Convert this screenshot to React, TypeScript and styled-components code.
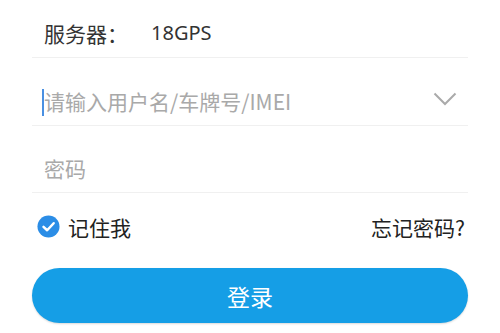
import React, { useState } from "react";
import styled, { createGlobalStyle } from "styled-components";

const GlobalStyle = createGlobalStyle`
  html, body {
    margin: 0;
    padding: 0;
    background: #ffffff;
  }
  body {
    font-family: "Noto Sans CJK SC", "Noto Sans", sans-serif;
  }
`;

const Page = styled.div`
  width: 500px;
  height: 333px;
  overflow: hidden;
  padding: 0 32px;
  box-sizing: border-box;
  display: flex;
  flex-direction: column;
`;

const FieldRow = styled.div<{ h: number }>`
  height: ${({ h }) => h}px;
  display: flex;
  align-items: flex-end;
  padding: 0 12px 13px;
  border-bottom: 1px solid #f0f0f0;
  box-sizing: border-box;
`;

const Label = styled.span`
  font-size: 21px;
  color: #333;
  width: 107px;
  line-height: 1;
`;

const Value = styled.span`
  font-size: 20px;
  color: #333;
  line-height: 1;
  font-family: "Noto Sans", sans-serif;
  padding-bottom: 1px;
`;

const Placeholder = styled.span`
  flex: 1;
  font-size: 21px;
  color: #a9a9a9;
  line-height: 1;
  position: relative;
`;

const Caret = styled.span`
  position: absolute;
  left: -2px;
  top: -2px;
  width: 1.5px;
  height: 27px;
  background: #4a90e2;
`;

const Chevron = styled.svg`
  width: 24px;
  height: 14px;
  margin: 0 -1px 6px 0;
`;

const OptionsRow = styled.div`
  height: 67px;
  display: flex;
  align-items: center;
  justify-content: space-between;
  padding: 0 3px 0 5px;
`;

const Remember = styled.label`
  display: flex;
  align-items: center;
  gap: 8px;
  font-size: 21px;
  color: #222;
  cursor: pointer;
`;

const Forgot = styled.a`
  font-size: 21px;
  color: #222;
  text-decoration: none;
`;

const LoginButton = styled.button`
  margin-top: 8px;
  height: 55px;
  border: none;
  border-radius: 28px;
  background: #159ee6;
  color: #fff;
  font-family: "Noto Sans CJK SC", sans-serif;
  font-size: 23px;
  box-shadow: 0 1px 2px rgba(0, 0, 0, 0.15);
  cursor: pointer;
`;

const CheckIcon = ({ checked }: { checked: boolean }) => (
  <svg width="23" height="23" viewBox="0 0 24 24">
    <circle cx="12" cy="12" r="11.5" fill={checked ? "#2b8de6" : "#ccc"} />
    <path
      d="M6.8 12.3 L10.6 15.9 L17.4 8.6"
      fill="none"
      stroke="#fff"
      strokeWidth="2.6"
      strokeLinecap="round"
      strokeLinejoin="round"
    />
  </svg>
);

export default function App() {
  const [remember, setRemember] = useState(true);

  return (
    <>
      <GlobalStyle />
      <Page>
        <FieldRow h={58}>
          <Label>服务器：</Label>
          <Value>18GPS</Value>
        </FieldRow>
        <FieldRow h={68}>
          <Placeholder>
            <Caret />
            请输入用户名/车牌号/IMEI
          </Placeholder>
          <Chevron viewBox="0 0 24 14">
            <path d="M1.5 1.5 L12 12 L22.5 1.5" fill="none" stroke="#aaa" strokeWidth="2" />
          </Chevron>
        </FieldRow>
        <FieldRow h={67}>
          <Placeholder>密码</Placeholder>
        </FieldRow>
        <OptionsRow>
          <Remember onClick={() => setRemember(!remember)}>
            <CheckIcon checked={remember} />
            记住我
          </Remember>
          <Forgot>忘记密码?</Forgot>
        </OptionsRow>
        <LoginButton>登录</LoginButton>
      </Page>
    </>
  );
}
